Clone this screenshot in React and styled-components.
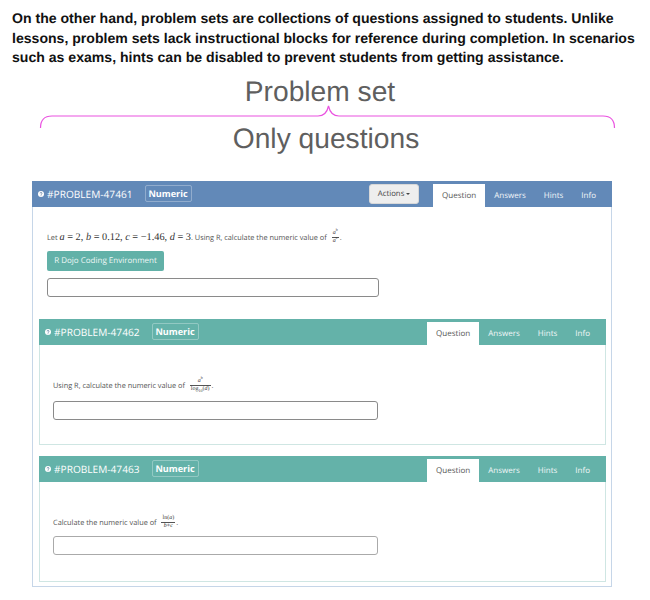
import React from "react";
import styled, { createGlobalStyle } from "styled-components";

const Global = createGlobalStyle`
  html, body { margin: 0; padding: 0; background: #fff; }
  * { box-sizing: border-box; }
`;
const Page = styled.div`width: 650px; height: 600px; overflow: hidden; font-family: "Open Sans", sans-serif; text-rendering: geometricPrecision;`;
const Intro = styled.p`
  margin: 0; padding: 9px 0 0 12px; width: 650px;
  font: bold 14.08px/19.5px "Liberation Sans", Arial, sans-serif; color: #111;
`;
const Caption = styled.div`
  text-align: center; color: #5f5f5f; font-family: "Liberation Sans", Arial, sans-serif;
  font-size: 28.2px; line-height: 34px; margin-left: ${p => p.$shift}px;
`;
const Top = styled(Caption)`margin-top: 6px;`;
const BraceSvg = styled.svg`display: block; width: 650px; height: 26px; margin-top: -5px; margin-bottom: -8px;`;
const Outer = styled.section`
  margin: 26px 38px 0 32px; width: 580px; height: 406px;
  border: 1px solid #c6d6e8; border-top: 0;
`;
const Inner = styled.section`
  margin: ${p => p.$top}px 5px 0 6px; height: ${p => p.$h}px;
  border: 1px solid #cfe6e3; border-top: 0;
`;
const Header = styled.header`
  display: flex; align-items: center; height: 26px; padding-left: 6px;
  margin: 0 -1px; background: ${p => p.$color}; color: #fff;
`;
const HelpIcon = styled.svg`width: 6px; height: 6px; margin-right: 3px; flex: none;`;
const Title = styled.span`font-size: 10.15px; white-space: nowrap;`;
const Badge = styled.span`
  margin-left: 12px; height: 17px; width: 47px; display: flex; align-items: center; justify-content: center;
  border: 1px solid rgba(255,255,255,.3); border-radius: 2px; font-size: 9.1px; font-weight: 700;
`;
const Spacer = styled.div`flex: 1;`;
const Actions = styled.button`
  width: 50px; height: 20px; margin-right: 14px; padding: 0; border: 1px solid #d8d8d8; border-radius: 3px;
  background: #eee; color: #444; font: 7.8px "Open Sans", sans-serif; text-rendering: geometricPrecision;
  display: flex; align-items: center; justify-content: center; gap: 2px;
`;
const Caret = styled.i`
  width: 0; height: 0; border-left: 2.2px solid transparent; border-right: 2.2px solid transparent; border-top: 2.2px solid #444;
`;
const Tabs = styled.nav`display: flex; align-self: flex-end; margin-right: 7px; height: 23px;`;
const Tab = styled.span`
  display: flex; align-items: center; padding: 0 9px; font-size: 8.02px;
  background: ${p => (p.$active ? "#fff" : "transparent")}; color: ${p => (p.$active ? "#555" : "#f2f7f8")};
`;
const Body = styled.div`padding: ${p => p.$top}px 0 0 ${p => p.$left}px;`;
const Question = styled.div`
  display: flex; align-items: center; height: 16px; font-size: 7.35px; color: #555; white-space: pre;
`;
const MathText = styled.span`font: 10.3px "Liberation Serif", serif; color: #333;`;
const Var = styled.i`font-family: "Liberation Serif", serif;`;
const Frac = styled.span`
  display: inline-flex; flex-direction: column; align-items: center; margin: 0 1px 0 3px;
  font: 6px/7px "Liberation Serif", serif; color: #333;
  sup, sub { font-size: 4px; line-height: 0; }
`;
const Num = styled.span`padding: 0 1px; border-bottom: 0.6px solid #555; width: 100%; text-align: center;`;
const Den = styled.span`padding: 0 1px;`;
const RButton = styled.button`
  display: block; width: 117px; height: 20px; margin-top: 5px; padding: 0; border: 0; border-radius: 2px;
  background: #62b1a8; color: #eef7f6; font: 8px "Open Sans", sans-serif; text-rendering: geometricPrecision;
`;
const Input = styled.div`
  width: ${p => p.$w}px; height: 19px; margin-top: ${p => p.$top}px;
  background: #fff; border: 1px solid ${p => p.$tone || "#8a8a8a"}; border-radius: 3px;
`;

const Help = () => (
  <HelpIcon viewBox="0 0 12 12">
    <circle cx="6" cy="6" r="6" fill="#fff" />
    <path d="M4.2 4.7a1.9 1.9 0 1 1 2.7 1.7c-.6.3-.9.6-.9 1.2" fill="none" stroke="#4a6f96" strokeWidth="1.4" />
    <circle cx="6" cy="9.6" r=".9" fill="#4a6f96" />
  </HelpIcon>
);

const CardHeader = ({ id, color, actions }) => (
  <Header $color={color}>
    <Help />
    <Title>#PROBLEM-{id}</Title>
    <Badge>Numeric</Badge>
    <Spacer />
    {actions && <Actions>Actions <Caret /></Actions>}
    <Tabs>
      <Tab $active>Question</Tab>
      <Tab>Answers</Tab>
      <Tab>Hints</Tab>
      <Tab>Info</Tab>
    </Tabs>
  </Header>
);

export default function App() {
  return (
    <Page>
      <Global />
      <Intro>
        On the other hand, problem sets are collections of questions assigned to students. Unlike
        lessons, problem sets lack instructional blocks for reference during completion. In scenarios
        such as exams, hints can be disabled to prevent students from getting assistance.
      </Intro>
      <Top $shift={-10}>Problem set</Top>
      <BraceSvg viewBox="0 0 650 26">
        <path d="M40.5 25C40.5 17 44 13 52 13H318C324 13 327 10 328.5 3C330 10 333 13 339 13H603C611 13 614.5 17 614.5 25" fill="none" stroke="#ea52e0" strokeWidth="1.2" />
      </BraceSvg>
      <Caption $shift={2}>Only questions</Caption>
      <Outer>
        <CardHeader id="47461" color="#6289b8" actions />
        <Body $top={23} $left={14}>
          <Question>
            Let <MathText><Var>a</Var> = 2, <Var>b</Var> = 0.12, <Var>c</Var> = −1.46, <Var>d</Var> = 3</MathText>. Using R, calculate the numeric value of{" "}
            <Frac><Num><Var>a</Var><sup>b</sup></Num><Den><Var>a</Var><sup>c</sup></Den></Frac>.
          </Question>
          <RButton>R Dojo Coding Environment</RButton>
          <Input $w={332} $top={7} />
        </Body>
        <Inner $top={22} $h={126}>
          <CardHeader id="47462" color="#64b2a9" />
          <Body $top={33} $left={13}>
            <Question>
              Using R, calculate the numeric value of{" "}
              <Frac><Num><Var>a</Var><sup>b</sup></Num><Den>log<sub>10</sub>(<Var>d</Var>)</Den></Frac>.
            </Question>
            <Input $w={325} $top={7} />
          </Body>
        </Inner>
        <Inner $top={11} $h={126}>
          <CardHeader id="47463" color="#64b2a9" />
          <Body $top={33} $left={13}>
            <Question>
              Calculate the numeric value of{" "}
              <Frac><Num>ln(<Var>a</Var>)</Num><Den><Var>b</Var>+<Var>c</Var></Den></Frac>.
            </Question>
            <Input $w={325} $top={5} $tone="#aaaaaa" />
          </Body>
        </Inner>
      </Outer>
    </Page>
  );
}
